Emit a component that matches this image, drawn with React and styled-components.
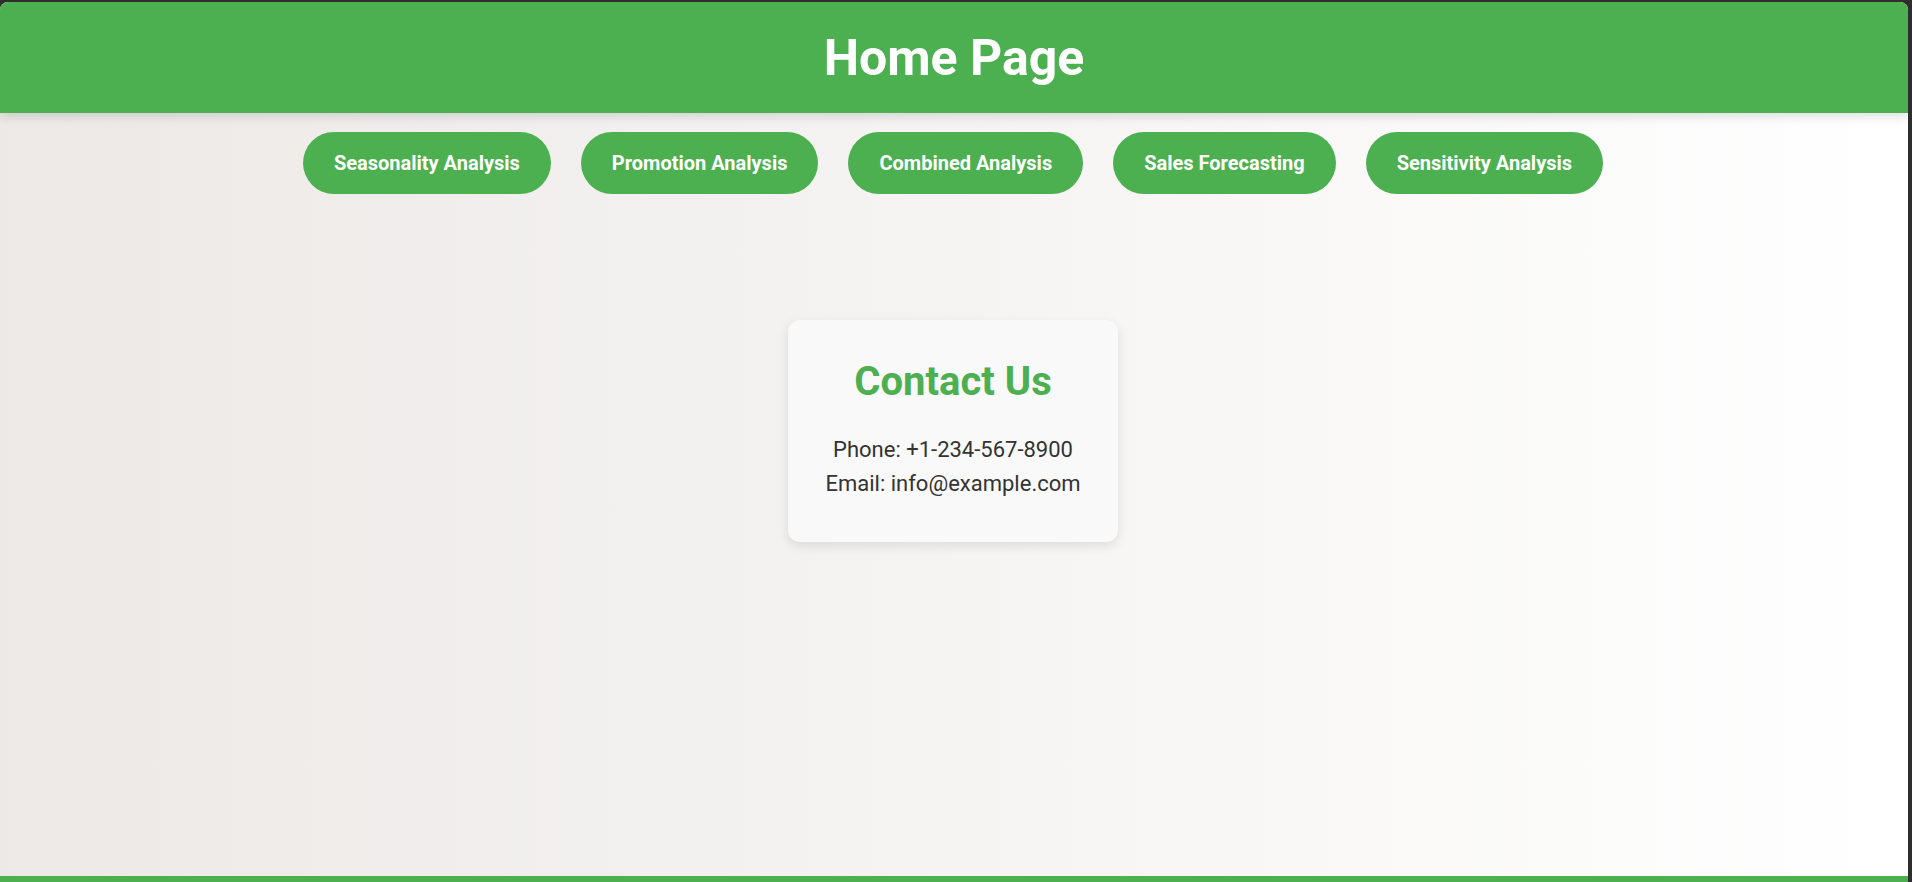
import React from 'react';
import styled, { createGlobalStyle } from 'styled-components';

const GlobalStyle = createGlobalStyle`
  html, body {
    margin: 0;
    padding: 0;
    background: #2e2e2e;
    font-family: Roboto, "Liberation Sans", sans-serif;
  }
`;

const Frame = styled.div`
  display: flex;
  box-sizing: border-box;
  height: 882px;
  padding: 2px 4px 0 0;
`;

const Page = styled.div`
  flex: 1;
  display: flex;
  flex-direction: column;
  border-radius: 8px 8px 0 0;
  overflow: hidden;
  background: linear-gradient(to right, #ece9e6, #ffffff);
`;

const Header = styled.header`
  position: relative;
  z-index: 1;
  height: 111px;
  flex-shrink: 0;
  display: flex;
  align-items: center;
  justify-content: center;
  background: #4caf50;
  box-shadow: 0 4px 10px rgba(0, 0, 0, 0.12);
`;

const Title = styled.h1`
  margin: 0;
  color: #fff;
  font-size: 50px;
  font-weight: 700;
`;

const Nav = styled.nav`
  display: flex;
  justify-content: center;
  gap: 30px;
  padding: 19px 2px 0 0;
`;

const NavButton = styled.button`
  border: none;
  border-radius: 31px;
  background: #4caf50;
  color: #fff;
  font-family: Roboto, "Liberation Sans", sans-serif;
  font-size: 20px;
  font-weight: 700;
  padding: 19px 31px;
  cursor: pointer;
`;

const Main = styled.main`
  flex: 1;
  display: flex;
  flex-direction: column;
  align-items: center;
  padding: 126px 2px 0 0;
`;

const Card = styled.section`
  width: 330px;
  box-sizing: border-box;
  padding: 38px 20px 46px;
  background: #f9f9f9;
  border-radius: 12px;
  box-shadow: 0 4px 12px rgba(0, 0, 0, 0.1);
  text-align: center;
`;

const CardTitle = styled.h2`
  margin: 0 0 32px;
  color: #4caf50;
  font-size: 40px;
  font-weight: 700;
`;

const Line = styled.p`
  margin: 0;
  color: #333;
  font-size: 22px;
  & + & {
    margin-top: 9px;
  }
`;

const Footer = styled.footer`
  height: 6px;
  flex-shrink: 0;
  background: #4caf50;
`;

const links = [
  'Seasonality Analysis',
  'Promotion Analysis',
  'Combined Analysis',
  'Sales Forecasting',
  'Sensitivity Analysis',
];

export default function App() {
  return (
    <>
      <GlobalStyle />
      <Frame>
        <Page>
          <Header>
            <Title>Home Page</Title>
          </Header>
          <Nav>
            {links.map((l) => (
              <NavButton key={l}>{l}</NavButton>
            ))}
          </Nav>
          <Main>
            <Card>
              <CardTitle>Contact Us</CardTitle>
              <Line>Phone: +1-234-567-8900</Line>
              <Line>Email: info@example.com</Line>
            </Card>
          </Main>
          <Footer />
        </Page>
      </Frame>
    </>
  );
}
